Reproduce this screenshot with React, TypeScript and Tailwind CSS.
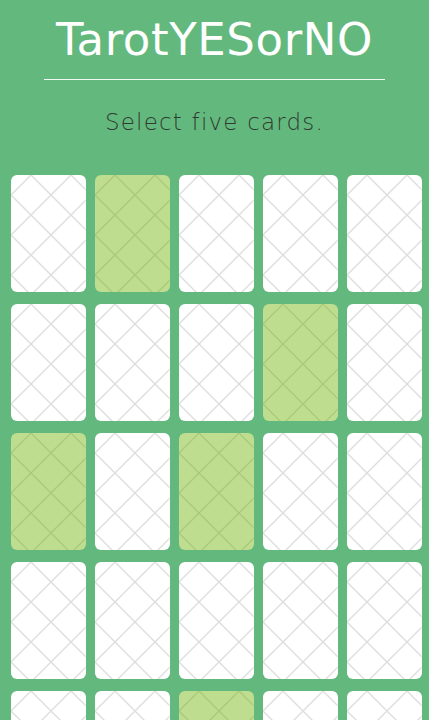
const selected = new Set([1, 8, 10, 12, 22]);

const cards = Array.from({ length: 78 }, (_, i) => i);

const CardBack = ({ picked }: { picked: boolean }) => (
  <div
    className={`relative h-[117px] overflow-hidden rounded-[6px] ${
      picked ? 'bg-[#bfdd8e]' : 'bg-white'
    }`}
  >
    <svg className="absolute inset-0 h-full w-full" aria-hidden="true">
      <defs>
        <pattern id={`diamond-${picked ? 'p' : 'w'}`} width="40" height="40" patternUnits="userSpaceOnUse">
          <path
            d="M20 0 L40 20 L20 40 L0 20 Z"
            fill="none"
            stroke={picked ? 'rgba(90,130,60,0.22)' : 'rgba(0,0,0,0.13)'}
            strokeWidth="1.4"
          />
        </pattern>
      </defs>
      <rect width="100%" height="100%" fill={`url(#diamond-${picked ? 'p' : 'w'})`} />
    </svg>
  </div>
);

export default function App() {
  return (
    <div className="min-h-screen w-full bg-[#63b97d] font-['DejaVu_Sans',sans-serif]">
      <header className="flex flex-col items-center pt-[14px]">
        <h1 className="text-[45px] leading-[52px] font-normal tracking-[0.6px] text-white">TarotYESorNO</h1>
        <div className="mt-[13px] h-px w-[341px] bg-white/90" />
        <p className="mt-[29px] text-[23px] leading-[27px] font-light tracking-[1.2px] text-[#2f3b32]">
          Select five cards.
        </p>
      </header>

      <main className="grid grid-cols-5 gap-x-[9.5px] gap-y-[12px] pt-[39px] pr-[7px] pb-4 pl-[11px]">
        {cards.map((i) => (
          <CardBack key={i} picked={selected.has(i)} />
        ))}
      </main>
    </div>
  );
}
